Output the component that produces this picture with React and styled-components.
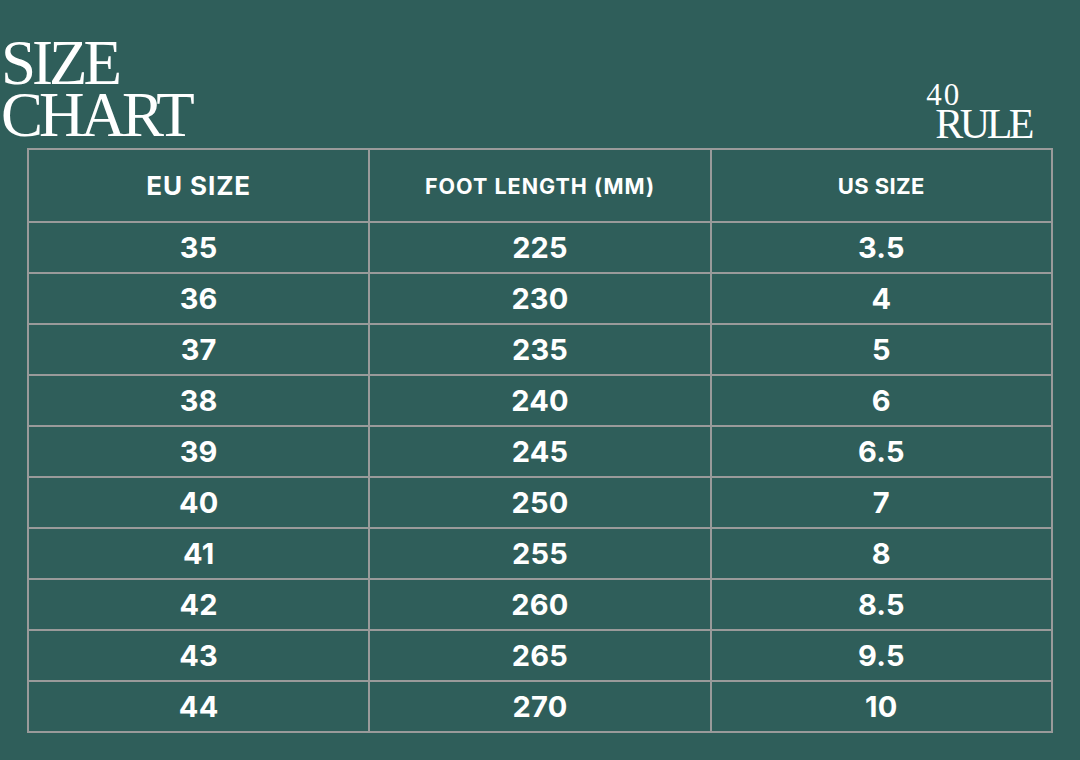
import React from 'react'
import styled, { createGlobalStyle } from 'styled-components'

const GlobalStyle = createGlobalStyle`
  html, body {
    margin: 0;
    padding: 0;
    background: #2f5e5a;
  }
`

const LINE = '#9a9a9a'

const Page = styled.div`
  width: 1080px;
  height: 760px;
  background: #2f5e5a;
  color: #ffffff;
  overflow: hidden;
`

const Header = styled.div`
  display: flex;
  justify-content: space-between;
  align-items: flex-end;
  height: 148px;
  padding: 0 49px 0 1px;
  box-sizing: border-box;
`

const Title = styled.h1`
  margin: 37px 0 0 0;
  align-self: flex-start;
  font-family: 'Liberation Serif', 'Times New Roman', serif;
  font-weight: 400;
  font-size: 63px;
  line-height: 52px;
  letter-spacing: -4px;
`

const Badge = styled.div`
  display: flex;
  flex-direction: column;
  align-items: flex-start;
  padding-bottom: 3px;
  font-family: 'Liberation Serif', 'Times New Roman', serif;
  font-weight: 400;
`

const BadgeNumber = styled.span`
  font-size: 31px;
  line-height: 28px;
  letter-spacing: 2px;
  margin-bottom: -6px;
`

const BadgeWord = styled.span`
  margin-left: 9px;
  font-size: 42px;
  line-height: 42px;
  letter-spacing: -3.5px;
`

const Table = styled.div`
  display: grid;
  grid-template-columns: repeat(3, 1fr);
  grid-template-rows: 71px;
  grid-auto-rows: 49px;
  gap: 2px;
  margin: 0 27px;
  border: 2px solid ${LINE};
  background: ${LINE};
  font-family: Inter, 'Open Sans', sans-serif;
`

const HeadCell = styled.div`
  display: flex;
  align-items: center;
  justify-content: center;
  background: #2f5e5a;
  font-weight: 700;
  font-size: ${p => p.$size}px;
  letter-spacing: ${p => p.$track}px;
`

const Cell = styled.div`
  display: flex;
  align-items: center;
  justify-content: center;
  background: #2f5e5a;
  font-weight: 700;
  font-size: 29px;
  letter-spacing: 0.2px;
`

const rows = [
  ['35', '225', '3.5'],
  ['36', '230', '4'],
  ['37', '235', '5'],
  ['38', '240', '6'],
  ['39', '245', '6.5'],
  ['40', '250', '7'],
  ['41', '255', '8'],
  ['42', '260', '8.5'],
  ['43', '265', '9.5'],
  ['44', '270', '10'],
]

export default function App() {
  return (
    <Page>
      <GlobalStyle />
      <Header>
        <Title>
          SIZE
          <br />
          CHART
        </Title>
        <Badge>
          <BadgeNumber>40</BadgeNumber>
          <BadgeWord>RULE</BadgeWord>
        </Badge>
      </Header>
      <Table>
        <HeadCell $size={26} $track={0.9}>EU SIZE</HeadCell>
        <HeadCell $size={21.5} $track={1}>FOOT LENGTH (MM)</HeadCell>
        <HeadCell $size={22} $track={0.4}>US SIZE</HeadCell>
        {rows.map(r =>
          r.map((v, i) => <Cell key={r[0] + '-' + i}>{v}</Cell>)
        )}
      </Table>
    </Page>
  )
}
